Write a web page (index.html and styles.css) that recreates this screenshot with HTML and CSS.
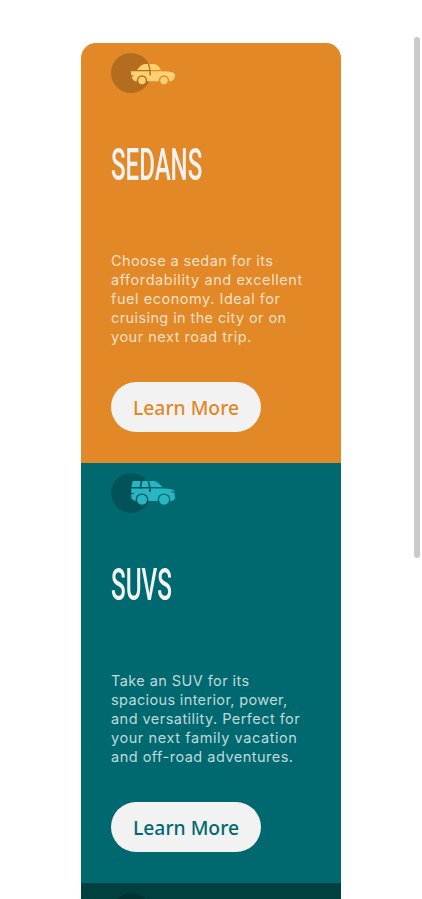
FILE: index.html
```html
<!DOCTYPE html>
<html lang="en">
<head>
<meta charset="utf-8">
<title>Car cards</title>
<link rel="stylesheet" href="styles.css">
</head>
<body>
<main class="cards">
  <section class="card sedans">
    <svg class="icon" width="64" height="40" viewBox="0 0 64 40">
      <defs><mask id="sedan"><rect width="64" height="40" fill="#fff"/><circle cx="31" cy="27.5" r="5.2"/><circle cx="53" cy="27.5" r="5.2"/><path d="M37.3 10Q39.3 15 39.3 22.4" fill="none" stroke="#000" stroke-width="1.5"/><path d="M19 23H22.5" stroke="#000" stroke-width="1.2"/></mask></defs>
      <circle cx="20" cy="20" r="20" fill="#000" opacity=".2"/>
      <g fill="#ffd173"><g mask="url(#sedan)"><path d="M26 17Q30 11 34 11H43Q47 11 50 17Z"/><path d="M20 18.2H52Q64 18.6 64 21.5Q64 27 60 28.2H24Q20 26.5 20 19Z"/></g><circle cx="31" cy="27.5" r="3.7"/><circle cx="53" cy="27.5" r="3.7"/></g>
    </svg>
    <h2 class="title">Sedans</h2>
    <p class="copy"><span class="line a1">Choose a sedan for its </span><span class="line a2">affordability and excellent </span><span class="line a3">fuel economy. Ideal for </span><span class="line a4">cruising in the city or on </span><span class="line a5">your next road trip.</span></p>
    <a class="button"><span>Learn More</span></a>
  </section>
  <section class="card suvs">
    <svg class="icon" width="64" height="40" viewBox="0 0 64 40">
      <defs><mask id="suv"><rect width="64" height="40" fill="#fff"/><circle cx="31" cy="26.8" r="6.4"/><circle cx="53" cy="26.8" r="6.4"/><path d="M30.6 7L29.2 15.5M37.2 7L39 15V19" fill="none" stroke="#000" stroke-width="1.7"/><path d="M19 20.5H23M60 19H65" stroke="#000" stroke-width="1"/></mask></defs>
      <circle cx="20" cy="20" r="20" fill="#000" opacity=".2"/>
      <g fill="#26b7c3"><g mask="url(#suv)"><path d="M20.3 14L21.8 8H43Q46 8 51.5 14Z"/><path d="M20.3 15.5H52Q62 16 63.2 17.5L64 25Q63 28 60 28H24Q20 26 20.3 24Z"/></g><circle cx="31" cy="26.8" r="5"/><circle cx="53" cy="26.8" r="5"/></g>
    </svg>
    <h2 class="title">SUVs</h2>
    <p class="copy"><span class="line b1">Take an SUV for its </span><span class="line b2">spacious interior, power, </span><span class="line b3">and versatility. Perfect for </span><span class="line b4">your next family vacation </span><span class="line b5">and off-road adventures.</span></p>
    <a class="button"><span>Learn More</span></a>
  </section>
  <section class="card luxury">
    <svg class="icon" width="64" height="40" viewBox="0 0 64 40"><circle cx="20" cy="20" r="20" fill="#000" opacity=".2"/></svg>
  </section>
</main>
<div class="scrollbar"></div>
</body>
</html>
```
FILE: styles.css
```css
* { box-sizing: border-box; }
html, body { height: 100%; }
body { margin: 0; background: #fff; overflow: hidden; }
.cards { width: 260px; height: 100vh; margin: 0 auto; padding-top: 43px; overflow: hidden; }
.card { display: flex; flex-direction: column; align-items: flex-start; height: 420px; padding: 10px 30px 31px; }
.sedans { background: #e28826; border-radius: 15px 15px 0 0; }
.suvs { background: #006970; }
.luxury { height: 16px; overflow: hidden; padding-bottom: 0; background: #004140; }
.icon { display: block; flex: none; }
.title { margin: 45px 0 0; height: 54px; font: 500 45px/53px Roboto, sans-serif; color: #f2f2f2; text-transform: uppercase; transform-origin: 0 50%; white-space: nowrap; }
.sedans .title { transform: scaleX(.535); }
.suvs .title { transform: scaleX(.54); }
.copy { margin: 59px 0 0; font: 400 14.5px/19px Inter, sans-serif; color: rgba(255, 255, 255, .75); white-space: nowrap; }
.line { display: block; }
.a1 { letter-spacing: .39px; }
.a2 { letter-spacing: .57px; }
.a3 { letter-spacing: .54px; }
.a4 { letter-spacing: .4px; }
.a5 { letter-spacing: .52px; }
.b1 { letter-spacing: .43px; }
.b2 { letter-spacing: .36px; }
.b3 { letter-spacing: .46px; }
.b4 { letter-spacing: .58px; }
.b5 { letter-spacing: .49px; }
.button { display: flex; align-items: center; justify-content: center; width: 150px; height: 50px; margin-top: auto; padding-top: 2px; border-radius: 25px; background: #f2f2f2; color: #e28826; font: 500 19.3px/24px "Noto Sans", sans-serif; }
.suvs .button { color: #006970; }
.scrollbar { position: absolute; right: 2px; top: 37px; width: 6px; height: 521px; border-radius: 3px; background: #cacaca; }
```
